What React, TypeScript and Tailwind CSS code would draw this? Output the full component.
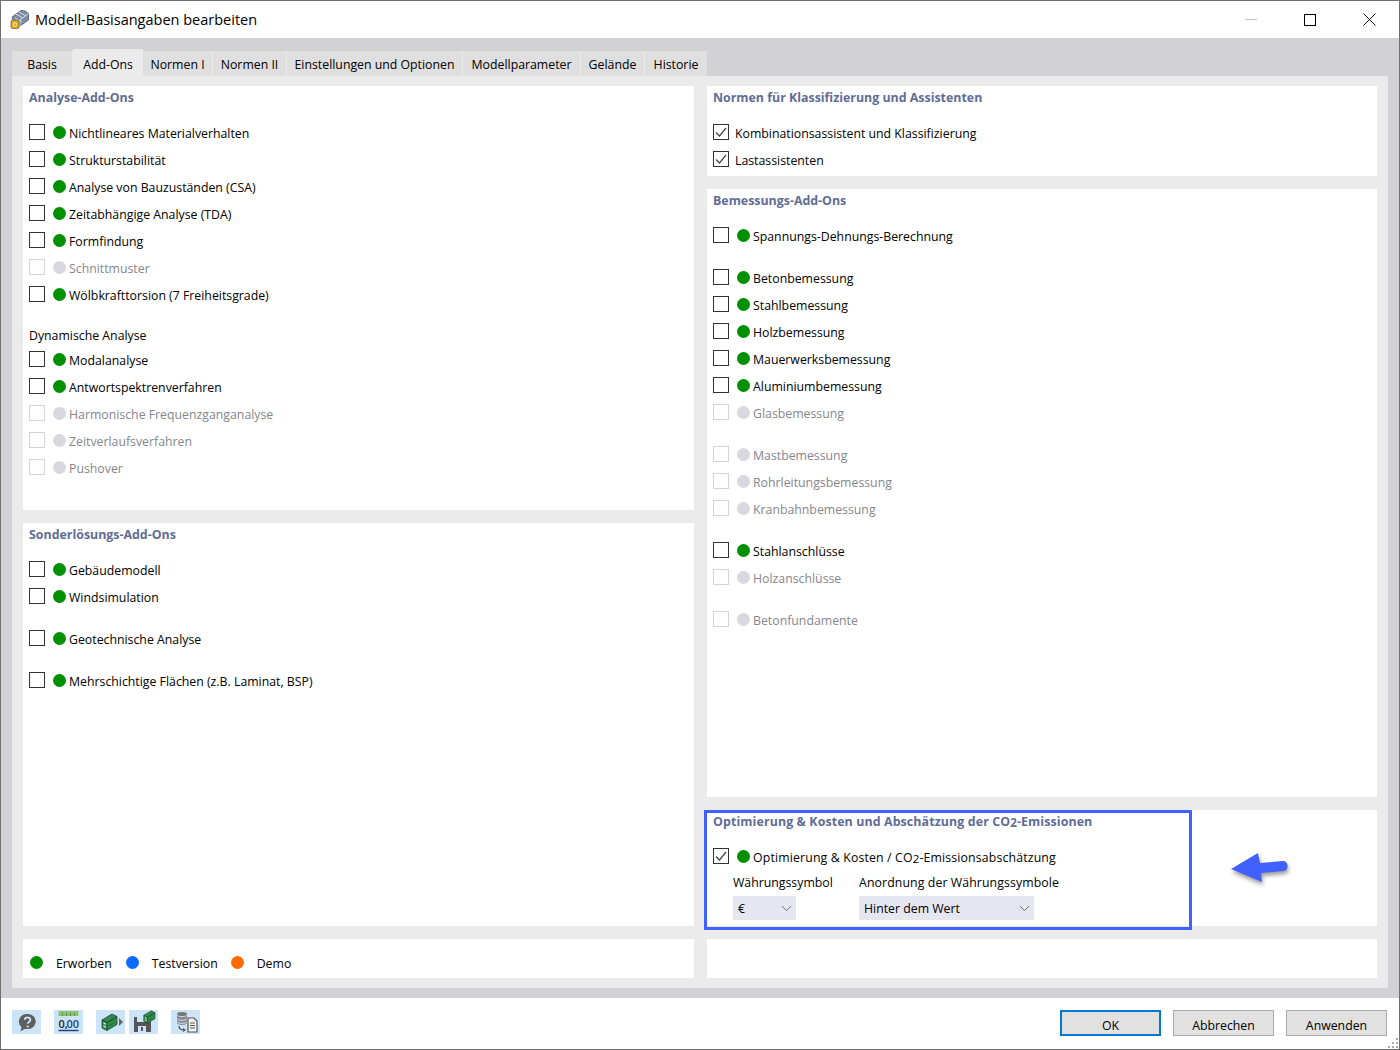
import { ChevronDown } from "lucide-react";

const font = { fontFamily: '"Open Sans", "Noto Sans", sans-serif' };

const tabs = [
  { label: "Basis", width: "w-[61px]" },
  { label: "Add-Ons", width: "w-[70px]", active: true },
  { label: "Normen I", width: "w-[70px]" },
  { label: "Normen II", width: "w-[74px]" },
  { label: "Einstellungen und Optionen", width: "w-[176px]" },
  { label: "Modellparameter", width: "w-[118px]" },
  { label: "Gelände", width: "w-[64px]" },
  { label: "Historie", width: "w-[62px]" },
];

function Sub() {
  return <span className="relative top-[1px] text-[11.5px]">2</span>;
}

function Row(props: { label: React.ReactNode; off?: boolean; checked?: boolean; noDot?: boolean; className?: string }) {
  return (
    <div className={`flex h-[27px] items-center ${props.className ?? ""}`}>
      <div
        className={`mb-[5px] flex size-4 shrink-0 items-center justify-center border bg-white ${
          props.off ? "border-[#d4d4d4]" : "border-[#333333]"
        }`}
      >
        {props.checked ? (
          <svg width="14" height="14" viewBox="0 0 14 14" fill="none">
            <path d="M2 7.5 5.5 11 12 3" stroke="#444444" strokeWidth="1.2" />
          </svg>
        ) : null}
      </div>
      {props.noDot ? (
        <span className="ml-[3px]" />
      ) : (
        <span
          className={`mb-[5px] ml-[8px] size-[13px] shrink-0 rounded-full ${
            props.off ? "bg-[#d8d8de]" : "bg-[#009000]"
          }`}
        />
      )}
      <span className={`ml-[3px] whitespace-nowrap ${props.off ? "text-[#85858f]" : "text-black"}`}>{props.label}</span>
    </div>
  );
}

function Panel(props: { title?: React.ReactNode; className: string; children?: React.ReactNode }) {
  return (
    <div className={`bg-white px-[6px] ${props.className}`}>
      {props.title ? (
        <div className="flex h-[24px] items-center whitespace-pre text-[12.4px] font-bold text-[#5f6c96]">
          {props.title}
        </div>
      ) : null}
      {props.children}
    </div>
  );
}

function ToolButton({ children, className }: { children: React.ReactNode; className: string }) {
  return <div className={`flex h-6 w-[29px] items-center justify-center bg-[#cce4f7] ${className}`}>{children}</div>;
}

// little green drawer cabinet used on two toolbar buttons
function Drawer({ x = 0, y = 0, scale = 1 }: { x?: number; y?: number; scale?: number }) {
  return (
    <g transform={`translate(${x} ${y}) scale(${scale})`}>
      <path d="M1 7 11 1l5 2.500v8L6 17.500l-5-2.500z" fill="#2f8a4e" stroke="#24452f" strokeWidth="0.8" />
      <path d="M1 7l5 2.500 10-6M6 9.500v8" stroke="#1f3d29" strokeWidth="0.8" fill="none" />
      <path d="M8 9l5-3M8 13l5-3" stroke="#1f5c33" strokeWidth="0.8" />
      <path d="M2.500 10l2.500 1.200M2.500 13l2.500 1.200" stroke="#e6f5ea" strokeWidth="1.200" />
    </g>
  );
}

function Combo({ value, className }: { value: string; className: string }) {
  return (
    <div className={`flex h-6 items-center justify-between bg-[#e6e6f0] pl-[5px] pr-[1px] ${className}`}>
      <span className="pt-[3px]">{value}</span>
      <ChevronDown className="size-[17px] text-[#555555]" strokeWidth={1.2} />
    </div>
  );
}

function DialogButton({ label, primary }: { label: string; primary?: boolean }) {
  return (
    <div
      className={`flex h-[26px] w-[101px] items-center justify-center bg-[#e1e1e1] pt-[6px] ${
        primary ? "border-2 border-[#0078d4]" : "border border-[#adadad]"
      }`}
    >
      {label}
    </div>
  );
}

function LegendItem({ label, dot, className }: { label: string; dot: string; className?: string }) {
  return (
    <div className={`flex items-start ${className ?? ""}`}>
      <span className={`mt-[17px] size-[13px] rounded-full ${dot}`} />
      <span className="ml-[13px] mt-[16px]">{label}</span>
    </div>
  );
}

export default function App() {
  return (
    <div
      style={font}
      className="relative flex h-[1050px] w-[1400px] flex-col overflow-hidden border border-[#707070] bg-white text-[12.3px] text-black"
    >
      {/* title bar */}
      <div className="flex h-[37px] shrink-0 items-center">
        <svg className="ml-[8px]" width="21" height="21" viewBox="0 0 21 21">
          <path d="M3 8 12 1.500c3-.5 6 1 7.500 3.500v6L11 17l-6-2z" fill="#7f8ca8" stroke="#4d5568" strokeWidth="0.8" />
          <path d="M7 5l7 4M10 3l7 4M11 17v-6l8-6M6 9l7 4" stroke="#d5dbe6" strokeWidth="1" fill="none" />
          <rect x="2" y="11" width="8" height="8.500" rx="1.500" fill="#d9a520" stroke="#6b5310" strokeWidth="0.6" />
          <circle cx="6" cy="15.500" r="1.800" fill="none" stroke="#fff3c0" strokeWidth="1" />
        </svg>
        <span className="ml-[5px] text-[14.5px]">Modell-Basisangaben bearbeiten</span>
        <div className="ml-auto flex items-center">
          <span className="h-px w-3 bg-[#c4c4c4]" />
          <span className="ml-[47px] size-3 border border-black" />
          <svg className="ml-[47px] mr-[23px]" width="13" height="13" viewBox="0 0 13 13">
            <path d="M.5.5l12 12M12.5.5l-12 12" stroke="#111111" strokeWidth="1" />
          </svg>
        </div>
      </div>

      {/* content band */}
      <div className="flex h-[960px] shrink-0 flex-col bg-[#d2d1d6] px-[11px] pb-[10px] pt-[11px]">
        <div className="flex h-[27px] shrink-0 items-end">
          {tabs.map((tab) => (
            <div
              key={tab.label}
              className={`flex items-center justify-center whitespace-nowrap ${tab.width} ${
                tab.active
                  ? "h-[27px] bg-[#ebebeb] pt-[5px]"
                  : "h-[25px] border-r border-[#ebebeb] bg-[#dfdfdf] pt-[3px] last:border-r-0"
              }`}
            >
              {tab.label}
            </div>
          ))}
        </div>

        <div className="grid h-[912px] grid-cols-[671px_670px] gap-x-[13px] bg-[#ebebeb] px-[11px] pb-[10px] pt-[10px]">
          <div className="flex flex-col gap-[13px]">
            <Panel title="Analyse-Add-Ons" className="h-[424px]">
              <div className="pt-[11px]">
                <Row label="Nichtlineares Materialverhalten" />
                <Row label="Strukturstabilität" />
                <Row label="Analyse von Bauzuständen (CSA)" />
                <Row label="Zeitabhängige Analyse (TDA)" />
                <Row label="Formfindung" />
                <Row label="Schnittmuster" off />
                <Row label="Wölbkrafttorsion (7 Freiheitsgrade)" />
              </div>
              <div className="mt-[13px] flex h-[27px] items-center">Dynamische Analyse</div>
              <Row label="Modalanalyse" className="-mt-[2px]" />
              <Row label="Antwortspektrenverfahren" />
              <Row label="Harmonische Frequenzganganalyse" off />
              <Row label="Zeitverlaufsverfahren" off />
              <Row label="Pushover" off />
            </Panel>

            <Panel title="Sonderlösungs-Add-Ons" className="h-[403px]">
              <div className="pt-[11px]">
                <Row label="Gebäudemodell" />
                <Row label="Windsimulation" />
                <Row label="Geotechnische Analyse" className="mt-[15px]" />
                <Row label="Mehrschichtige Flächen (z.B. Laminat, BSP)" className="mt-[15px]" />
              </div>
            </Panel>

            <Panel className="flex h-[39px] items-start">
              <LegendItem label="Erworben" dot="bg-[#009000]" className="ml-[1px]" />
              <LegendItem label="Testversion" dot="bg-[#0a6cff]" className="ml-[14px]" />
              <LegendItem label="Demo" dot="bg-[#ff6a00]" className="ml-[13px]" />
            </Panel>
          </div>

          <div className="flex flex-col gap-[13px]">
            <Panel title="Normen für Klassifizierung und Assistenten" className="h-[90px]">
              <div className="pt-[11px]">
                <Row label="Kombinationsassistent und Klassifizierung" checked noDot />
                <Row label="Lastassistenten" checked noDot />
              </div>
            </Panel>

            <Panel title="Bemessungs-Add-Ons" className="h-[608px]">
              <div className="pt-[11px]">
                <Row label="Spannungs-Dehnungs-Berechnung" />
                <Row label="Betonbemessung" className="mt-[15px]" />
                <Row label="Stahlbemessung" />
                <Row label="Holzbemessung" />
                <Row label="Mauerwerksbemessung" />
                <Row label="Aluminiumbemessung" />
                <Row label="Glasbemessung" off />
                <Row label="Mastbemessung" off className="mt-[15px]" />
                <Row label="Rohrleitungsbemessung" off />
                <Row label="Kranbahnbemessung" off />
                <Row label="Stahlanschlüsse" className="mt-[15px]" />
                <Row label="Holzanschlüsse" off />
                <Row label="Betonfundamente" off className="mt-[15px]" />
              </div>
            </Panel>

            <Panel
              title={
                <span className="tracking-[0.11px]">
                  Optimierung &amp; Kosten und Abschätzung der CO
                  <Sub />
                  -Emissionen
                </span>
              }
              className="relative h-[116px]"
            >
              <div className="pt-[11px]">
                <Row
                  label={
                    <span className="tracking-[0.15px]">
                      Optimierung &amp; Kosten / CO
                      <Sub />
                      -Emissionsabschätzung
                    </span>
                  }
                  checked
                />
              </div>
              <div className="ml-[20px] flex">
                <div className="w-[126px]">
                  <div className="mb-[2px] flex h-[22px] items-center">Währungssymbol</div>
                  <Combo value="€" className="w-[63px]" />
                </div>
                <div>
                  <div className="mb-[2px] flex h-[22px] items-center tracking-[0.1px]">Anordnung der Währungssymbole</div>
                  <Combo value="Hinter dem Wert" className="w-[175px]" />
                </div>
              </div>
              {/* blue highlight + arrow */}
              <div className="absolute -left-[3px] top-0 h-[120px] w-[488px] border-[3px] border-[#4060ff]" />
              <svg
                className="absolute left-[520px] top-[40px] drop-shadow-[1px_3px_2px_rgba(0,0,0,0.4)]"
                width="64"
                height="36"
                viewBox="0 0 64 36"
              >
                <path d="M4 19 31 3l2 10 23-2c6 0 6 10 0 10l-22 2 1 9z" fill="#4060ff" />
              </svg>
            </Panel>

            <Panel className="h-[39px]" />
          </div>
        </div>
      </div>

      {/* bottom toolbar */}
      <div className="relative flex h-[51px] shrink-0 items-start pt-[12px]">
        <ToolButton className="ml-[11px]">
          <svg width="24" height="22" viewBox="0 0 24 22">
            <path d="M12.500 3a8 7.500 0 0 1 .5 15H9.500l-4 2.500 1-4.500A8 7.500 0 0 1 12.500 3z" fill="#5f5f5f" />
            <path d="M9.800 8.800c0-3.200 5.600-3.200 5.600 0 0 2.200-2.700 2.200-2.700 4" fill="none" stroke="#cce4f7" strokeWidth="1.800" />
            <circle cx="12.700" cy="15.500" r="1.100" fill="#cce4f7" />
          </svg>
        </ToolButton>
        <ToolButton className="ml-[13px]">
          <svg width="26" height="24" viewBox="0 0 26 24">
            <rect x="2.500" y="1" width="20" height="5" fill="#8cc46f" />
            <path d="M6.500 3v3M10.500 3v3M14.500 3v3M18.500 3v3" stroke="#5b8f45" strokeWidth="1" />
            <text x="2.500" y="17.500" fontSize="11" fontFamily="Open Sans, sans-serif" fontWeight="600" fill="#222222">
              0,
            </text>
            <text x="10.500" y="17.500" fontSize="11" fontFamily="Open Sans, sans-serif" fontWeight="600" fill="#1f3b8a">
              00
            </text>
            <path d="M2.500 20.500h20" stroke="#1f3b8a" strokeWidth="1.400" />
          </svg>
        </ToolButton>
        <ToolButton className="ml-[13px]">
          <svg width="26" height="20" viewBox="0 0 26 20">
            <Drawer x={3} y={1} />
            <path d="M21 6l4 4-4 4z" fill="#666666" />
          </svg>
        </ToolButton>
        <ToolButton className="ml-[4px]">
          <svg width="26" height="24" viewBox="0 0 26 24">
            <path d="M3 7h15l2 2v13H3z" fill="#555555" />
            <rect x="6" y="7" width="8" height="5" fill="#cce4f7" />
            <rect x="7" y="16" width="8" height="6" fill="#cce4f7" />
            <rect x="10" y="17" width="2" height="4" fill="#555555" />
            <Drawer x={12} y={0} scale={0.75} />
          </svg>
        </ToolButton>
        <ToolButton className="ml-[13px]">
          <svg width="26" height="24" viewBox="0 0 26 24">
            <ellipse cx="9" cy="4" rx="5" ry="2" fill="#777777" />
            <path d="M4 5v8c0 2.500 10 2.500 10 0V5c0 2.500-10 2.500-10 0z" fill="#8a8a8a" />
            <path d="M4 8.500c0 2.500 10 2.500 10 0M4 11.500c0 2.500 10 2.500 10 0" stroke="#cce4f7" fill="none" />
            <path d="M6 16c0 3 2 4 5 4" stroke="#555555" strokeWidth="1.300" fill="none" />
            <path d="M10 18v4l3-2z" fill="#555555" />
            <path d="M15 8h6l3 3v11h-9z" fill="#f4f4f4" stroke="#555555" strokeWidth="1.200" />
            <path d="M17 13h5M17 15.500h5M17 18h5" stroke="#555555" />
          </svg>
        </ToolButton>
        <div className="ml-auto mr-[12px] flex gap-[12px]">
          <DialogButton label="OK" primary />
          <DialogButton label="Abbrechen" />
          <DialogButton label="Anwenden" />
        </div>
        <svg className="absolute bottom-0 right-0" width="11" height="11" viewBox="0 0 11 11" fill="#a8a8a8">
          <rect x="8" y="0" width="2" height="2" />
          <rect x="4" y="4" width="2" height="2" />
          <rect x="8" y="4" width="2" height="2" />
          <rect x="0" y="8" width="2" height="2" />
          <rect x="4" y="8" width="2" height="2" />
          <rect x="8" y="8" width="2" height="2" />
        </svg>
      </div>
    </div>
  );
}
